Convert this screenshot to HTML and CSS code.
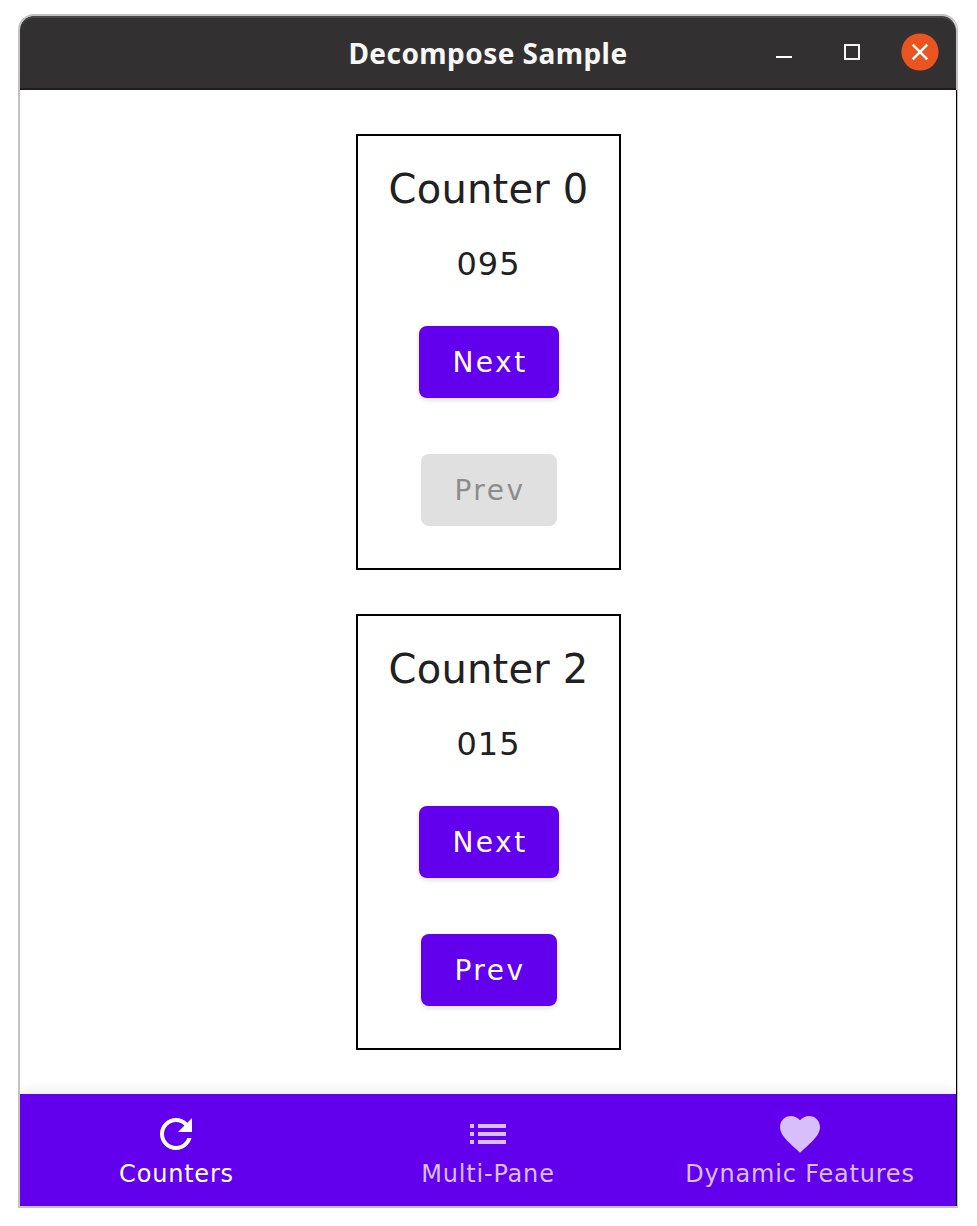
FILE: index.html
```html
<!DOCTYPE html>
<html lang="en">
<head>
<meta charset="utf-8">
<title>Decompose Sample</title>
<link rel="stylesheet" href="styles.css">
</head>
<body>
<div class="window">
  <header class="titlebar">
    <h1 class="title">Decompose Sample</h1>
    <div class="controls">
      <svg class="ctl" width="38" height="38" viewBox="0 0 38 38"><path d="M11 24h16" stroke="#fff" stroke-width="2"/></svg>
      <svg class="ctl" width="38" height="38" viewBox="0 0 38 38"><rect x="12" y="12" width="14" height="14" fill="none" stroke="#f7f7f7" stroke-width="2"/></svg>
      <svg class="ctl" width="38" height="38" viewBox="0 0 38 38"><circle cx="19" cy="19" r="18.6" fill="#e95420"/><path d="M11.7 11.7l14.6 14.6M26.3 11.7L11.7 26.3" stroke="#fff" stroke-width="2.5"/></svg>
    </div>
  </header>
  <main class="content">
    <section class="card">
      <h2 class="name">Counter 0</h2>
      <p class="value">095</p>
      <button class="btn next">Next</button>
      <button class="btn prev" disabled>Prev</button>
    </section>
    <section class="card">
      <h2 class="name">Counter 2</h2>
      <p class="value">015</p>
      <button class="btn next">Next</button>
      <button class="btn prev">Prev</button>
    </section>
  </main>
  <nav class="nav">
    <a class="item active"><svg class="icon" viewBox="0 0 24 24"><path d="M17.65 6.35C16.2 4.9 14.21 4 12 4c-4.42 0-7.99 3.58-7.99 8s3.57 8 7.99 8c3.73 0 6.84-2.55 7.73-6h-2.08c-.82 2.33-3.04 4-5.65 4-3.31 0-6-2.69-6-6s2.69-6 6-6c1.66 0 3.14.69 4.22 1.78L13 11h7V4l-2.35 2.35z"/></svg><span class="label">Counters</span></a>
    <a class="item"><svg class="icon" viewBox="0 0 24 24"><path d="M3 13h2v-2H3v2zm0 4h2v-2H3v2zm0-8h2V7H3v2zm4 4h14v-2H7v2zm0 4h14v-2H7v2zM7 7v2h14V7H7z"/></svg><span class="label">Multi-Pane</span></a>
    <a class="item"><svg class="icon" viewBox="0 0 24 24"><path d="M12 21.35l-1.45-1.32C5.4 15.36 2 12.28 2 8.5 2 5.42 4.42 3 7.5 3c1.74 0 3.41.81 4.5 2.09C13.09 3.81 14.76 3 16.5 3 19.58 3 22 5.42 22 8.5c0 3.78-3.4 6.86-8.55 11.54L12 21.35z"/></svg><span class="label">Dynamic Features</span></a>
  </nav>
</div>
</body>
</html>
```
FILE: styles.css
```css
* { box-sizing: border-box; }
body { margin: 0; background: #fff; font-family: "DejaVu Sans", sans-serif; color: #212121; }
.window {
  width: 940px; height: 1194px; margin: 14px 0 0 18px;
  border: 2px solid #c3c3c3; border-right-width: 1px; border-radius: 16px 16px 0 0;
  display: flex; flex-direction: column; overflow: hidden; background: #fff;
}
.titlebar {
  height: 74px; flex: none; background: #333031;
  border-right: 1px solid #c3c3c3; border-radius: 14px 15px 0 0;
  box-shadow: inset 0 2px #4a4748, inset 0 -2px #1e1c1d;
  display: grid; grid-template-columns: 1fr auto 1fr; align-items: center;
  padding-bottom: 2px;
}
.title {
  grid-column: 2; margin: 0; padding-top: 2px; color: #f7f7f7;
  font: bold 28px/38px "Noto Sans", sans-serif; letter-spacing: 0.45px; white-space: nowrap;
}
.controls { display: flex; gap: 30px; justify-self: end; padding-right: 17px; }
.ctl { display: block; }
.content {
  flex: 1; display: flex; flex-direction: column; align-items: center;
  gap: 44px; padding: 44px 0 0 1px; border-right: 1px solid #000;
}
.card {
  width: 265px; height: 436px; flex: none; border: 2px solid #000;
  display: flex; flex-direction: column; align-items: center; padding: 29px 0 0 1px;
}
.name { margin: 0; padding-right: 1px; font-weight: 400; font-size: 40px; line-height: 48px; letter-spacing: 0.2px; white-space: nowrap; }
.value { margin: 32px 0 43px; padding-right: 1px; font-size: 32px; line-height: 38px; letter-spacing: 0.9px; }
.btn {
  height: 72px; padding: 2px 0 0 2px; border: 0; border-radius: 8px; background: #6200ee; color: #fff;
  font: 28px/70px "DejaVu Sans", sans-serif; letter-spacing: 2.5px;
  box-shadow: 0 2px 5px rgba(0,0,0,.14);
}
.next { width: 140px; margin-bottom: 56px; }
.prev { width: 136px; }
.btn:disabled { background: #e0e0e0; color: #8c8c8c; box-shadow: none; }
.nav {
  height: 112px; flex: none; display: grid; grid-template-columns: repeat(3, 1fr);
  background: #6200ee; border-right: 1px solid #000; box-shadow: 0 0 14px rgba(0,0,0,.13);
}
.item { display: flex; flex-direction: column; align-items: center; padding-top: 16px; color: #d8bffb; }
.active { color: #fff; }
.icon { width: 48px; height: 48px; fill: currentColor; }
.label { margin-top: 1px; font-size: 24px; line-height: 30px; letter-spacing: 0.8px; white-space: nowrap; }
.active .label { padding-left: 1px; }
```
